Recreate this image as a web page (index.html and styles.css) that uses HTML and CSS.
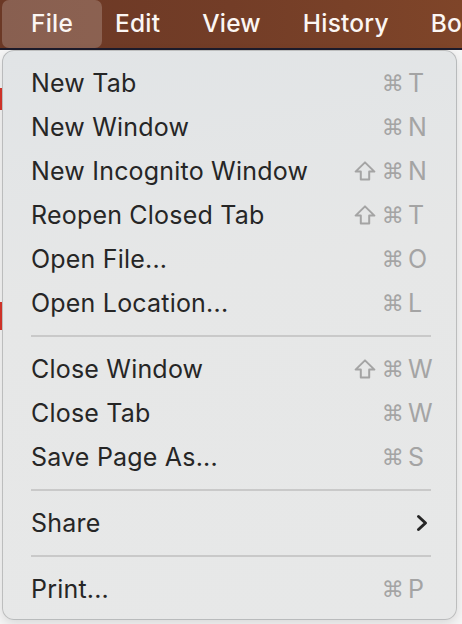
FILE: index.html
```html
<!DOCTYPE html>
<html lang="en">
<head>
<meta charset="utf-8">
<title>File menu</title>
<link rel="stylesheet" href="styles.css">
</head>
<body>
<header class="menubar">
  <span class="menubar-item active">File</span>
  <span class="menubar-item">Edit</span>
  <span class="menubar-item">View</span>
  <span class="menubar-item">History</span>
  <span class="menubar-item">Bo</span>
</header>
<main class="page">
  <div class="page-mark mark-a"></div>
  <div class="page-mark mark-b"></div>
</main>
<nav class="menu">
  <div class="item"><span class="label">New Tab</span><span class="keys"><span class="cmd">⌘</span><span class="key">T</span></span></div>
  <div class="item"><span class="label">New Window</span><span class="keys"><span class="cmd">⌘</span><span class="key">N</span></span></div>
  <div class="item"><span class="label">New Incognito Window</span><span class="keys"><svg class="shift" width="22" height="20" viewBox="0 0 22 20"><path d="M11 1.4 L20.4 10.6 H15.2 V18.4 H6.8 V10.6 H1.6 Z" fill="none" stroke="#a4a4a4" stroke-width="2" stroke-linejoin="round"/></svg><span class="cmd">⌘</span><span class="key">N</span></span></div>
  <div class="item"><span class="label">Reopen Closed Tab</span><span class="keys"><svg class="shift" width="22" height="20" viewBox="0 0 22 20"><path d="M11 1.4 L20.4 10.6 H15.2 V18.4 H6.8 V10.6 H1.6 Z" fill="none" stroke="#a4a4a4" stroke-width="2" stroke-linejoin="round"/></svg><span class="cmd">⌘</span><span class="key">T</span></span></div>
  <div class="item"><span class="label">Open File...</span><span class="keys"><span class="cmd">⌘</span><span class="key">O</span></span></div>
  <div class="item"><span class="label">Open Location...</span><span class="keys"><span class="cmd">⌘</span><span class="key">L</span></span></div>
  <div class="sep"></div>
  <div class="item"><span class="label">Close Window</span><span class="keys"><svg class="shift" width="22" height="20" viewBox="0 0 22 20"><path d="M11 1.4 L20.4 10.6 H15.2 V18.4 H6.8 V10.6 H1.6 Z" fill="none" stroke="#a4a4a4" stroke-width="2" stroke-linejoin="round"/></svg><span class="cmd">⌘</span><span class="key">W</span></span></div>
  <div class="item"><span class="label">Close Tab</span><span class="keys"><span class="cmd">⌘</span><span class="key">W</span></span></div>
  <div class="item"><span class="label">Save Page As...</span><span class="keys"><span class="cmd">⌘</span><span class="key">S</span></span></div>
  <div class="sep"></div>
  <div class="item"><span class="label">Share</span><svg class="chevron" width="14" height="18" viewBox="0 0 14 18"><path d="M3.5 2.5 L10.5 9 L3.5 15.5" fill="none" stroke="#262626" stroke-width="3" stroke-linecap="round" stroke-linejoin="round"/></svg></div>
  <div class="sep"></div>
  <div class="item"><span class="label">Print...</span><span class="keys"><span class="cmd">⌘</span><span class="key">P</span></span></div>
</nav>
</body>
</html>
```
FILE: styles.css
```css
* { box-sizing: border-box; }
html, body { margin: 0; padding: 0; }
body {
  width: 462px;
  height: 624px;
  overflow: hidden;
  background: #f3f3f3;
  font-family: "Inter", "Liberation Sans", sans-serif;
  position: relative;
}
.menubar {
  height: 50px;
  display: flex;
  gap: 42px;
  padding-left: 31px;
  background: linear-gradient(90deg, #6b3825 0%, #733d27 50%, #7f4529 100%);
  border-bottom: 2px solid #1d1b2b;
  white-space: nowrap;
  overflow: hidden;
}
.menubar-item {
  position: relative;
  color: #fbf6f3;
  font-size: 24.5px;
  font-weight: 500;
  letter-spacing: 0.2px;
  line-height: 46px;
  z-index: 0;
}
.menubar-item.active::before {
  content: "";
  position: absolute;
  left: -29px;
  right: -29px;
  top: 0;
  bottom: 0;
  background: rgba(255, 255, 255, 0.2);
  border-radius: 7px;
  z-index: -1;
}
.page {
  height: 574px;
  background: #f6f6f6;
  position: relative;
}
.page-mark { position: absolute; left: 0; width: 3px; background: #d9352b; }
.mark-a { top: 38px; height: 22px; }
.mark-b { top: 252px; height: 28px; }
.menu {
  position: absolute;
  top: 50px;
  left: 2px;
  width: 455px;
  height: 570px;
  padding: 10px 25px 10px 28px;
  background: linear-gradient(170deg, #e1e4e6 0%, #e6e7e7 40%, #e7e8e8 100%);
  border: 1px solid rgba(0, 0, 0, 0.18);
  border-radius: 12px;
  box-shadow: 0 4px 12px rgba(0, 0, 0, 0.12);
}
.item {
  height: 44px;
  display: flex;
  align-items: center;
  justify-content: space-between;
  color: #262626;
  font-size: 25px;
  letter-spacing: 0.2px;
}
.keys {
  display: flex;
  align-items: center;
  color: #a4a4a4;
}
.shift { margin-right: 6px; }
.cmd {
  font-family: "DejaVu Sans", sans-serif;
  font-size: 22px;
}
.key {
  width: 23px;
  margin-left: 4px;
  font-size: 25px;
  letter-spacing: 0;
}
.chevron { margin-right: 2px; }
.sep {
  height: 22px;
  display: flex;
  align-items: center;
}
.sep::before {
  content: "";
  flex: 1;
  height: 1.5px;
  background: #c9c9c9;
}
```
